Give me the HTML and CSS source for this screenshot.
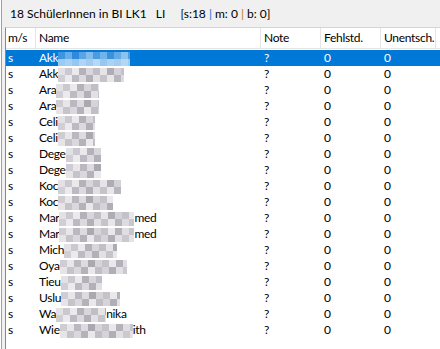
FILE: index.html
```html
<!DOCTYPE html>
<html lang="de">
<head>
    <meta charset="UTF-8">
    <title>SchülerInnen BI LK1</title>
    <link rel="stylesheet" href="styles.css">
</head>
<body>
    <div class="window">
        <!-- Kursinfo -->
        <div class="info">
            <span>18 SchülerInnen in BI LK1</span>
            <span class="teacher">LI</span>
            <span class="stats">[s:18 <span class="sep-blue">|</span> m: 0 <span class="sep-orange">|</span> b: 0]</span>
        </div>

        <!-- Liste (Nachnamen verpixelt) -->
        <div class="grid">
            <div class="row head">
                <div class="cell">m/s</div>
                <div class="cell">Name</div>
                <div class="cell">Note</div>
                <div class="cell">Fehlstd.</div>
                <div class="cell">Unentsch.</div>
                <div class="cell filler"></div>
            </div>

            <div class="row selected">
                <div class="cell">s</div>
                <div class="cell">Akk<span class="mosaic w72"></span></div>
                <div class="cell">?</div>
                <div class="cell">0</div>
                <div class="cell">0</div>
            </div>
            <div class="row">
                <div class="cell">s</div>
                <div class="cell">Akk<span class="mosaic w66"></span></div>
                <div class="cell">?</div>
                <div class="cell">0</div>
                <div class="cell">0</div>
            </div>
            <div class="row">
                <div class="cell">s</div>
                <div class="cell">Ara<span class="mosaic w43"></span></div>
                <div class="cell">?</div>
                <div class="cell">0</div>
                <div class="cell">0</div>
            </div>
            <div class="row">
                <div class="cell">s</div>
                <div class="cell">Ara<span class="mosaic w43 alt"></span></div>
                <div class="cell">?</div>
                <div class="cell">0</div>
                <div class="cell">0</div>
            </div>
            <div class="row">
                <div class="cell">s</div>
                <div class="cell">Celi<span class="mosaic w37"></span></div>
                <div class="cell">?</div>
                <div class="cell">0</div>
                <div class="cell">0</div>
            </div>
            <div class="row">
                <div class="cell">s</div>
                <div class="cell">Celi<span class="mosaic w37 alt"></span></div>
                <div class="cell">?</div>
                <div class="cell">0</div>
                <div class="cell">0</div>
            </div>
            <div class="row">
                <div class="cell">s</div>
                <div class="cell">Dege<span class="mosaic w35"></span></div>
                <div class="cell">?</div>
                <div class="cell">0</div>
                <div class="cell">0</div>
            </div>
            <div class="row">
                <div class="cell">s</div>
                <div class="cell">Dege<span class="mosaic w35 alt"></span></div>
                <div class="cell">?</div>
                <div class="cell">0</div>
                <div class="cell">0</div>
            </div>
            <div class="row">
                <div class="cell">s</div>
                <div class="cell">Koc<span class="mosaic w63"></span></div>
                <div class="cell">?</div>
                <div class="cell">0</div>
                <div class="cell">0</div>
            </div>
            <div class="row">
                <div class="cell">s</div>
                <div class="cell">Koc<span class="mosaic w55 alt"></span></div>
                <div class="cell">?</div>
                <div class="cell">0</div>
                <div class="cell">0</div>
            </div>
            <div class="row">
                <div class="cell">s</div>
                <div class="cell">Mar<span class="mosaic w75"></span>med</div>
                <div class="cell">?</div>
                <div class="cell">0</div>
                <div class="cell">0</div>
            </div>
            <div class="row">
                <div class="cell">s</div>
                <div class="cell">Mar<span class="mosaic w75 alt"></span>med</div>
                <div class="cell">?</div>
                <div class="cell">0</div>
                <div class="cell">0</div>
            </div>
            <div class="row">
                <div class="cell">s</div>
                <div class="cell">Mich<span class="mosaic w53"></span></div>
                <div class="cell">?</div>
                <div class="cell">0</div>
                <div class="cell">0</div>
            </div>
            <div class="row">
                <div class="cell">s</div>
                <div class="cell">Oya<span class="mosaic w67 alt"></span></div>
                <div class="cell">?</div>
                <div class="cell">0</div>
                <div class="cell">0</div>
            </div>
            <div class="row">
                <div class="cell">s</div>
                <div class="cell">Tieu<span class="mosaic w41"></span></div>
                <div class="cell">?</div>
                <div class="cell">0</div>
                <div class="cell">0</div>
            </div>
            <div class="row">
                <div class="cell">s</div>
                <div class="cell">Uslu<span class="mosaic w59 alt"></span></div>
                <div class="cell">?</div>
                <div class="cell">0</div>
                <div class="cell">0</div>
            </div>
            <div class="row">
                <div class="cell">s</div>
                <div class="cell">Wa<span class="mosaic w50"></span>nika</div>
                <div class="cell">?</div>
                <div class="cell">0</div>
                <div class="cell">0</div>
            </div>
            <div class="row">
                <div class="cell">s</div>
                <div class="cell">Wie<span class="mosaic w73 alt"></span>ith</div>
                <div class="cell">?</div>
                <div class="cell">0</div>
                <div class="cell">0</div>
            </div>
        </div>
    </div>
</body>
</html>
```

FILE: styles.css
```css
body {
    margin: 0;
    padding: 0;
    background: #ffffff;
    font-family: Lato, "Noto Sans", sans-serif;
    font-size: 12px;
    letter-spacing: -0.3px;
    color: #000000;
    overflow: hidden;
}

.window {
    margin-left: 1px;
    height: 349px;
    border-left: 1px solid #a0a0a0;
    background: #f0f0f0;
    padding-left: 3px;
    display: flex;
    flex-direction: column;
}

/* Kursinfo */
.info {
    flex-shrink: 0;
    height: 27px;
    box-sizing: border-box;
    padding: 6px 0 0 5px;
    line-height: 16px;
    letter-spacing: 0;
    white-space: nowrap;
}

.teacher {
    margin-left: 6px;
}

.stats {
    margin-left: 12px;
}

.sep-blue {
    color: #1e6fd0;
}

.sep-orange {
    color: #c87800;
}

/* Liste */
.grid {
    flex: 1;
    background: #ffffff;
    border-left: 1px solid #828790;
    border-top: 1px solid #d5d5d5;
}

.row {
    display: grid;
    grid-template-columns: 30px 225px 60px 60px 55px 1fr;
    height: 16px;
    line-height: 16px;
}

.row .cell {
    padding-left: 2px;
    white-space: nowrap;
    overflow: hidden;
}

.row .cell:nth-child(n+2) {
    padding-left: 3px;
}

.row.head {
    height: 20px;
    line-height: 20px;
    border-bottom: 1px solid #e5e5e5;
    margin-bottom: 1px;
}

.row.head .cell {
    border-right: 1px solid #e5e5e5;
}

.row.head .cell.filler {
    border-right: none;
}

.row.selected {
    background: #0078d7;
    color: #ffffff;
}

/* verpixelte Namensteile */
.mosaic {
    display: inline-block;
    height: 14px;
    vertical-align: -4px;
    background:
        linear-gradient(90deg, #e2e2e5 0 7px, #cbc9cf 7px 14px, #ebe9eb 14px 21px, #b3b2ba 21px 28px, #d8d6da 28px 35px, #c0bec6 35px 42px, #e6e4e6 42px 49px, #aeacb4 49px 56px, #d4d2d7 56px 63px, #c4c2c9 63px 70px, #e8e6e8 70px)
            top / 100% 50% no-repeat,
        linear-gradient(90deg, #d0cfd5 0 7px, #eceaec 7px 14px, #bcbac2 14px 21px, #dcdade 21px 28px, #b2b0b8 28px 35px, #e2e0e3 35px 42px, #c6c4cb 42px 49px, #e8e6e8 49px 56px, #b8b6be 56px 63px, #dddbdf 63px 70px, #c9c7cd 70px)
            bottom / 100% 50% no-repeat;
}

.mosaic.alt {
    background:
        linear-gradient(90deg, #cfcdd3 0 7px, #e8e6e8 7px 14px, #bab8c0 14px 21px, #dddbdf 21px 28px, #aaa9b1 28px 35px, #d6d4d9 35px 42px, #c5c3ca 42px 49px, #eae8ea 49px 56px, #b3b1ba 56px 63px, #e0dee1 63px 70px, #c8c6cc 70px)
            top / 100% 50% no-repeat,
        linear-gradient(90deg, #e6e4e7 0 7px, #c6c4cb 7px 14px, #dad8dd 14px 21px, #b4b2ba 21px 28px, #eae8ea 28px 35px, #c1bfc6 35px 42px, #d6d4d9 42px 49px, #b0aeb6 49px 56px, #e2e0e3 56px 63px, #cbc9cf 63px 70px, #e4e2e5 70px)
            bottom / 100% 50% no-repeat;
}

.selected .mosaic {
    background:
        linear-gradient(90deg, #3d95e0 0 7px, #6aaee8 7px 14px, #2f8add 14px 21px, #5aa4e4 21px 28px, #82bcec 28px 35px, #4a9be2 35px 42px, #72b3ea 42px 49px, #3a92df 49px 56px, #64aae6 56px 63px, #8cc2ee 63px 70px, #4e9ee2 70px)
            top / 100% 50% no-repeat,
        linear-gradient(90deg, #9ccaf0 0 7px, #a8d0f2 7px 14px, #94c6ef 14px 21px, #b0d4f3 21px 28px, #a0ccf1 28px 35px, #b6d8f4 35px 42px, #98c8f0 42px 49px, #acd2f2 49px 56px, #a2cdf1 56px 63px, #b4d6f3 63px 70px, #9ecbf0 70px)
            bottom / 100% 50% no-repeat;
}

.w35 { width: 35px; }
.w37 { width: 37px; }
.w41 { width: 41px; }
.w43 { width: 43px; }
.w50 { width: 50px; }
.w53 { width: 53px; }
.w55 { width: 55px; }
.w59 { width: 59px; }
.w63 { width: 63px; }
.w66 { width: 66px; }
.w67 { width: 67px; }
.w72 { width: 72px; }
.w73 { width: 73px; }
.w75 { width: 75px; }
```
